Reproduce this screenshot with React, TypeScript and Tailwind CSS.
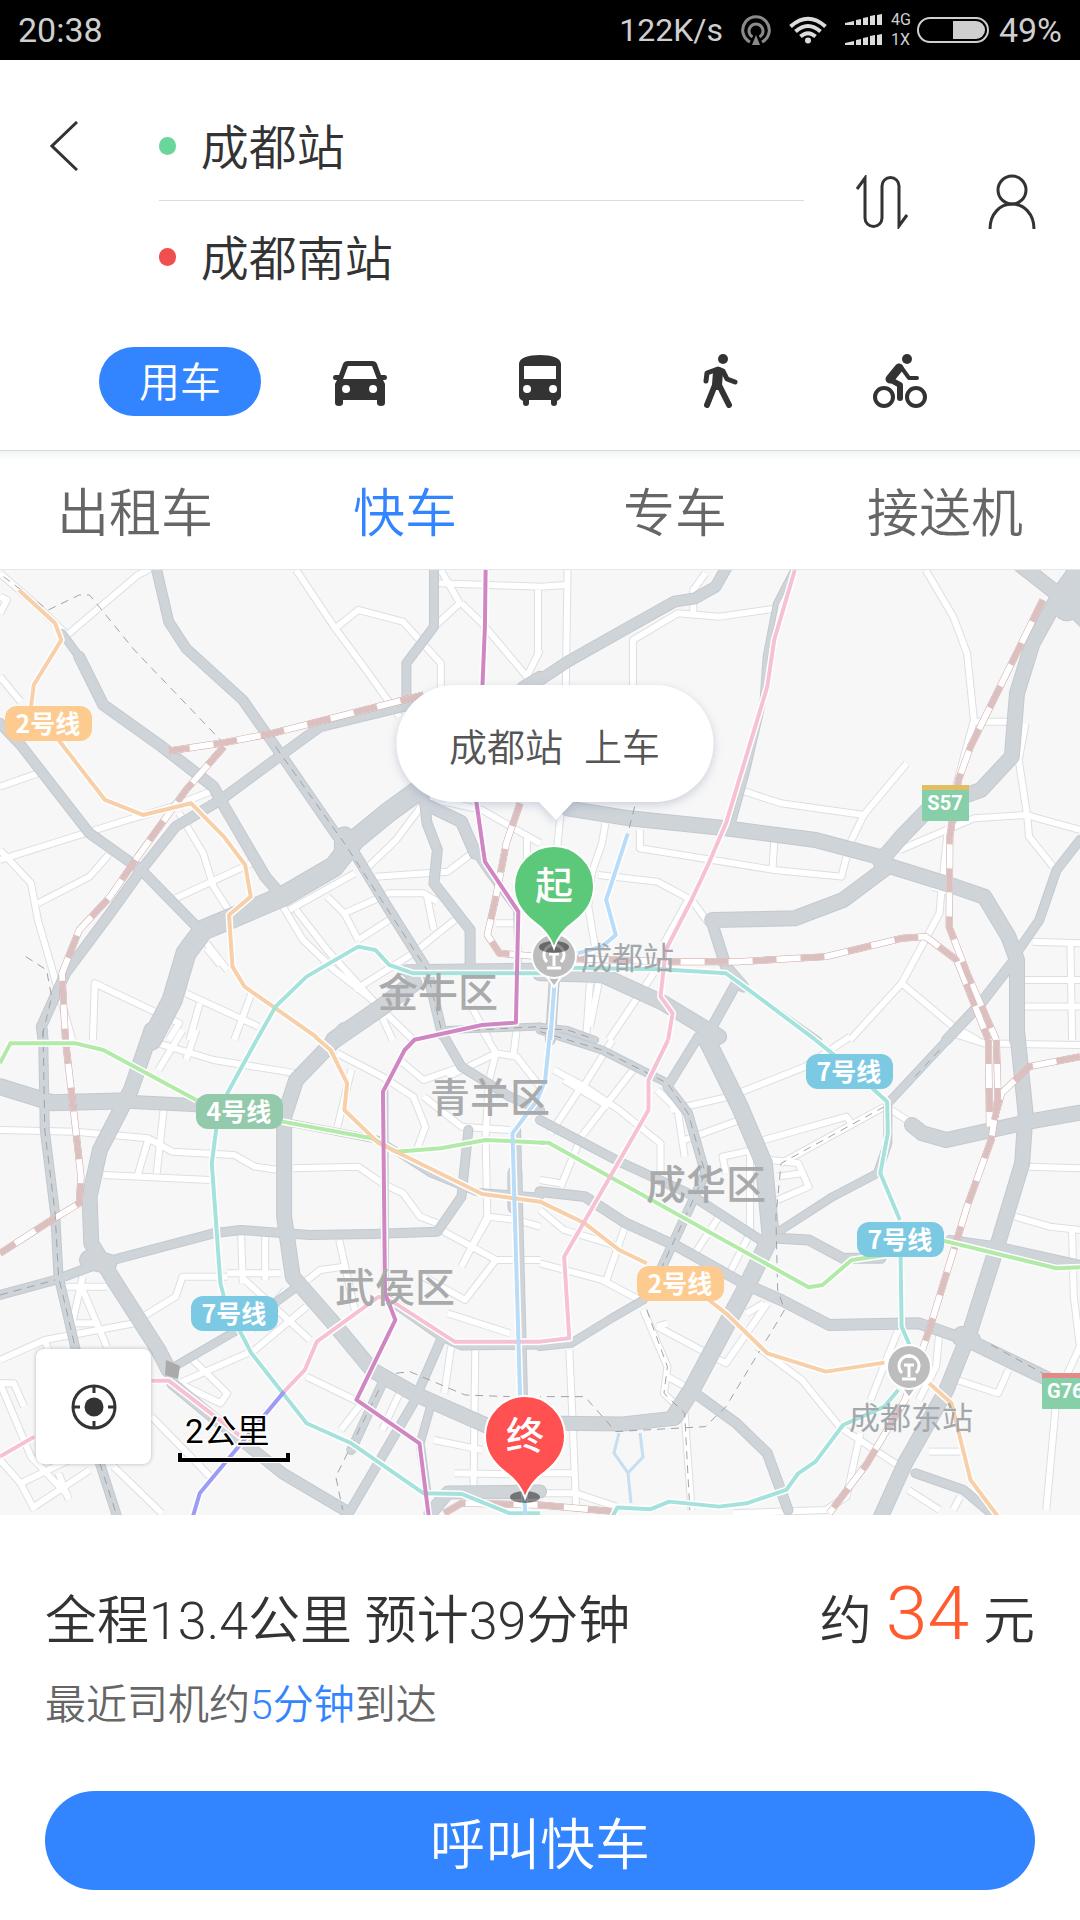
import React from 'react';

type Road = [number, string];
type MetroLine = [string, string];

interface Tile {
  at: string;
  streets: string[];
  roads: Road[];
  rails: string[];
  paths: string[];
  metro: MetroLine[];
}

const ORANGE = '#f7cfa8';
const TEAL = '#a5e2db';
const PURPLE = '#cf86c2';
const PINK = '#f6c1d3';
const GREEN = '#b2eaa8';
const BLUE = '#b9dcf8';
const VIOLET = '#9c9cf4';

// Four tiles cover the city. Points are in each tile's own units.
const tiles: Tile[] = [
  {
    at: 'translate(0 -10) scale(.3444 .3333)',
    streets: [
      '0,350 60,425', '195,225 400,45 440,25', '0,900 370,780 500,740 610,695', '0,680 110,640',
      '0,870 90,970 110,1080 155,1240 210,1440', '110,1030 260,950 315,885', '860,30 970,200 1070,340 1160,470',
      '980,200 1040,150 1170,185 1280,310 1280,430', '1260,200 1335,130 1280,30', '1275,70 1568,80',
      '1340,130 1400,190 1530,350 1568,270', '1562,90 1562,290', '520,760 590,880 620,980 670,1060', '510,1015 730,910',
      '810,1020 880,1140 970,1230 1070,1310 1200,1440', '860,1050 950,1170 1090,1330', '840,1050 1030,940',
      '1090,950 1300,935 1370,880', '1070,920 1150,840 1230,730', '950,1010 1000,1060 1040,1140',
      '1000,1060 1130,1000 1230,1000 1270,1025', '1240,1010 1260,1110', '1040,1140 1130,1080',
      '1030,1290 1200,1180 1320,1080', '270,1440 275,1270 520,1390 490,1440', '540,1300 750,1400',
      '600,1150 660,1230', '580,1330 550,1440', '730,1300 680,1440', '1370,1340 1420,1440', '1440,1090 1500,1090',
      '1290,725 1400,750 1568,850', '1530,830 1530,900', '0,40 100,130 200,230', '0,110 20,120 0,160',
      '600,1165 640,1215', '1100,1350 1140,1440',
    ],
    roads: [
      [10, '455,30 490,185 540,265 705,420 810,575 980,830 1030,880 1130,1050 1240,1230 1285,1425'],
      [8, '180,220 230,290'],
      [11, '230,290 300,435 470,560 620,680 640,720 770,950 820,1010'],
      [10, '0,490 60,555 260,820 410,930 580,1110'],
      [9, '1260,30 1260,200 1180,310 1180,435'],
      [10, '1190,435 930,500 850,560 640,720 510,800 410,930 320,1060 190,1240 120,1400 125,1440'],
      [20, '1230,680 1130,755 1030,840 970,920 820,1010 660,1080 590,1110 540,1180 500,1320 440,1440'],
      [20, '1000,830 1000,880'],
      [10, '1230,700 1240,790 1270,870 1260,970 1365,1110 1365,1225'],
      [12, '1250,740 1340,785 1380,880'],
      [6, '1380,880 1420,940 1500,1050 1505,1230'],
      [12, '1180,1232 1568,1228'],
      [17, '970,1440 1110,1340 1200,1270'],
      [7, '1290,1410 1568,1400'],
      [14, '1568,355 1520,385'],
    ],
    rails: [
      '1230,405 790,520 640,550 490,573',
      '650,560 540,690 400,890 320,1010 230,1110 180,1240 190,1440',
      '1510,730 1470,850 1440,1010 1415,1125 1450,1180 1568,1190',
    ],
    paths: [
      '10,50 140,150 230,105 260,105 390,270 640,540', '75,1190 135,1230 150,1310 120,1440',
      '800,560 1000,850 1240,1230 1285,1425', '1290,1415 1568,1400',
    ],
    metro: [
      [ORANGE, '55,90 160,190 178,240 98,375 90,440'],
      [ORANGE, '170,540 305,720 415,765 555,730 650,830 712,915 728,1010 665,1065 675,1220 710,1280 920,1432'],
      [TEAL, '745,1440 800,1340 890,1250 1040,1160 1090,1170 1130,1215 1200,1240 1580,1240'],
      [PURPLE, '1410,30 1408,200 1400,400'],
      [PURPLE, '1383,725 1408,905 1505,1055 1498,1388 1400,1395 1200,1440'],
    ],
  },
  {
    at: 'translate(540 -10) scale(.3444 .3333)',
    streets: [
      '80,30 75,380', '0,80 75,75', '480,40 445,90 445,165', '690,145 520,170 400,160 270,240 270,380',
      '1120,30 1200,170 1240,280 1260,480 1205,690', '1265,485 1360,485', '580,690 700,730 940,765 1065,610',
      '940,765 900,850', '1410,490 1390,600 1415,770 1420,830 1490,920', '1045,870 1260,775 1410,765 1568,810',
      '290,810 290,865 680,930 875,950 890,890', '680,845 675,930', '190,790 180,850 150,940 140,1040 160,1160',
      '170,945 340,965 440,1020 490,1090', '1185,800 1165,1000 1160,1060 1050,1270 900,1440',
      '1050,1270 1200,1400 1270,1440', '1430,1145 1568,1150', '1400,1260 1568,1260', '1400,1340 1568,1340',
      '1540,1150 1545,1440', '60,760 50,860', '330,1240 200,1440', '145,1270 135,1420', '170,1270 145,1400',
      '430,1020 360,1150', '1140,980 1200,1000',
    ],
    roads: [
      [11, '540,25 510,80 450,115 390,125 260,200 80,305 0,360'],
      [5, '735,30 685,130 655,290 645,440 600,640 560,790'],
      [15, '80,745 260,775 540,805 800,840 1000,895'],
      [15, '1000,890 1050,830 1130,745 1280,690 1370,590 1385,400 1430,250 1510,100'],
      [15, '1390,10 1500,100 1590,190'],
      [28, '1580,30 1525,110 1530,140'],
      [15, '990,910 1190,975 1290,1010 1360,1130 1385,1200 1385,1440'],
      [15, '1010,920 880,1020 740,1075 500,1080'],
      [11, '500,1090 540,1220 590,1280'],
      [5, '590,1280 810,1440'],
      [15, '0,1240 180,1245 360,1330 520,1430'],
      [10, '570,1270 500,1400'],
      [9, '1390,1170 1450,1080 1500,930 1568,840'],
      [10, '1385,1190 1280,1330 1180,1440'],
      [7, '0,1400 80,1410 160,1440'],
      [10, '42,1250 30,1440'],
    ],
    rails: [
      '1460,120 1250,560 1215,660 1190,830 1188,1100 1240,1240 1325,1440',
      '60,1195 380,1205 580,1205 830,1190 1050,1135 1120,1130 1210,1200 1302,1440',
    ],
    paths: ['0,1405 80,1410 150,1435', '275,740 255,820'],
    metro: [
      [PINK, '740,30 680,240 660,380 540,790 490,910 440,1020 365,1170 350,1310 385,1360 372,1440'],
      [TEAL, '0,1222 350,1228 540,1240 620,1300 800,1440'],
      [BLUE, '255,820 192,1020 220,1125 180,1160 110,1180'],
      [BLUE, '42,1270 30,1440'],
    ],
  },
  {
    at: 'translate(0 460) scale(.3444 .3333)',
    streets: [
      '0,300 220,305 430,325 500,365 680,375 740,410 810,420',
      '850,415 1040,410 1110,460 1170,490 1220,560 1270,580', '475,240 455,430', '430,330 400,435',
      '300,435 610,450', '460,40 620,90 860,130', '530,0 460,120', '570,0 540,90', '980,70 1110,140 1200,200 1235,290 1210,360',
      '1160,90 1230,150 1340,110', '1020,120 980,290', '700,610 705,760', '770,615 770,750', '660,730 815,730',
      '415,860 510,800 530,740 660,740', '880,760 930,720 1000,710', '985,630 1030,840', '180,770 310,770',
      '240,740 210,880', '210,880 280,880', '0,990 130,930 390,880', '240,780 310,950', '700,740 900,930',
      '830,780 730,900', '520,1060 740,960 890,830', '560,990 660,1090 640,1120 520,1060',
      '1280,600 1370,650 1420,560', '1370,650 1340,710', '1440,690 1568,690', '1420,560 1500,570 1568,590',
      '1410,330 1415,560 1370,650 1440,690', '1400,0 1440,70 1500,80 1568,170', '1500,0 1490,80', '1440,70 1420,150 1410,320', '1300,140 1440,70',
      '1440,690 1350,810 1230,740', '1300,850 1480,910', '890,1040 1050,1120 990,1200', '0,1060 90,1280 200,1400',
      '200,1290 60,1360', '0,1290 60,1360 100,1440', '100,1430 260,1320', '330,1310 470,1450', '440,1160 610,1340',
      '1380,960 1375,1370', '1310,950 1290,1090', '1260,1230 1400,1260', '1320,1330 1568,1335', '1160,1090 1110,1200',
      '130,930 140,960', '0,1060 40,1060 70,1130', '1230,200 1340,290 1480,300', '170,1330 200,1410',
    ],
    roads: [
      [16, '0,170 150,218 370,212'],
      [13, '370,215 560,225 800,250'],
      [15, '440,0 380,180 290,360 260,500 265,640 330,750 460,960 490,1020'],
      [20, '260,690 310,700'],
      [15, '1000,0 860,150 825,260 825,560 850,740 960,870 1080,1020 1200,1090 1420,1190'],
      [9, '125,0 130,300 160,550 170,740 220,960'],
      [9, '290,1300 340,1460'],
      [9, '0,795 160,750 290,700 620,610 700,600 900,615 1080,612 1270,605 1340,500 1360,300'],
      [9, '1290,20 1340,110 1480,200 1568,240'],
      [8, '490,1020 690,900 850,780'],
      [11, '500,1060 640,1180 820,1330 1000,1440'],
      [7, '1116,180 1118,800'],
      [8, '1130,810 1280,920 1340,948 1568,945'],
      [7, '850,280 1100,330 1250,430 1380,485 1568,500'],
      [9, '1280,930 1200,1120 1010,1455'],
      [9, '1110,1060 1020,1260'],
      [8, '1250,1130 1220,1240 1240,1390'],
      [13, '1568,1385 1300,1388 1250,1450'],
      [14, '1495,430 1495,530'],
      [8, '1500,300 1520,1100'],
    ],
    rails: ['190,30 220,300 235,440 230,520 150,570 0,670', '1290,1450 1340,1420 1568,1425'],
    paths: [
      '1150,1030 1190,1025 1350,1095 1480,1100', '1100,1080 975,1340 995,1440', '125,0 130,300 160,550 170,740 220,960',
      '0,795 160,750', '290,1300 340,1460',
    ],
    metro: [
      [GREEN, '0,100 30,40 220,40 300,60 570,210'],
      [GREEN, '820,275 1080,325 1150,365 1280,355 1410,330 1580,338'],
      [TEAL, '745,30 660,190 630,280 615,400 640,760 650,800'],
      [TEAL, '695,900 730,970 890,1180 1020,1240 1230,1390 1340,1392 1480,1450 1568,1450'],
      [ORANGE, '915,20 960,60 1008,160 1000,240 1100,340 1400,492 1568,515'],
      [PINK, '0,1280 100,1220'],
      [PINK, '440,1052 490,1052 700,1220'],
      [PINK, '825,1085 885,1020 920,935 1100,800 1140,815 1320,935 1568,935'],
      [PURPLE, '1203,30 1175,60 1112,185 1118,790 1148,870 1035,1110 1218,1240 1245,1460'],
      [VIOLET, '825,1085 580,1390 560,1460'],
      [BLUE, '1583,150 1560,210 1488,310 1510,1100 1525,1455'],
    ],
  },
  {
    at: 'translate(540 460) scale(.3444 .3333)',
    streets: [
      '40,120 130,170 230,240 350,340 350,430', '270,120 120,320 60,470', '120,170 30,310', '120,180 210,30',
      '340,180 400,240 420,380', '380,240 550,200 770,110 900,20', '420,330 580,270', '650,330 890,260 910,290',
      '670,390 750,400 780,470 690,510', '540,430 530,380 620,360', '610,360 610,600', '450,670 520,560',
      '550,730 610,610', '0,700 180,750 290,810', '250,580 190,760', '0,540 70,600 230,650', '690,440 760,430',
      '340,890 540,1000 660,820', '300,840 370,1010 360,1090 420,1150 440,1440', '650,820 600,850', '340,890 370,880',
      '630,950 760,1050 870,1190 1060,1320', '85,960 95,1180 105,1440', '0,1330 105,1330', '0,1390 105,1390 220,1430',
      '1420,410 1568,415', '1380,560 1480,590 1568,600', '1545,600 1550,800 1568,950 1500,1100 1470,1440',
      '1200,10 1290,40 1568,45', '960,1110 1040,900', '930,1210 890,1400 830,1440 560,1450', '1130,1265 1220,1265',
      '1210,1050 1330,1090 1360,1020', '1160,900 1150,1010 1100,1110', '1070,1380 1160,1440', '1020,240 1080,280',
      '370,1040 440,1080', '0,450 60,460', '1220,1400 1200,1440', '200,230 70,150', '1000,230 700,400',
    ],
    roads: [
      [17, '480,20 580,230 650,400 670,620 600,770 440,1080 390,1160'],
      [14, '390,1165 240,1182 60,1180'],
      [9, '460,20 370,170 430,250 480,430 440,520 350,720'],
      [8, '0,0 180,60 370,160'],
      [9, '0,270 240,400 430,490 640,630'],
      [10, '0,485 130,500 250,580 400,650 590,760'],
      [11, '590,760 700,810 840,885 1100,880 1240,930'],
      [8, '300,810 200,870 90,940 0,950'],
      [15, '1385,0 1410,250 1400,400 1330,640 1250,900 1180,1080 1060,1300 990,1460'],
      [15, '1568,248 1420,275 1180,330 1110,310 1080,285'],
      [8, '1200,10 1010,220 1010,340 980,430 850,500 700,600'],
      [10, '690,625 780,630 880,685 990,685'],
      [9, '1190,630 1330,650 1568,705'],
      [14, '1240,930 1470,1045'],
      [10, '450,1090 570,1180 660,1270 720,1440'],
      [9, '1090,1330 1230,1380 1310,1450'],
      [20, '1225,920 1250,930'],
    ],
    rails: [
      '1325,30 1330,200 1310,330 1240,530 1130,900 1060,1110 950,1300 840,1450',
      '1568,80 1420,110 1340,190 1318,270', '1302,30 1305,290', '0,1425 220,1445',
    ],
    paths: [
      '1000,230 700,400 685,560 690,780 710,840 540,1130 480,1190 220,1205 130,1100 0,1100',
      '310,840 370,1010 360,1090 420,1150 435,1440', '0,5 180,60 370,160 430,250 480,430 440,520 350,720',
      '1310,945 1460,1030', '1160,60 1080,150',
    ],
    metro: [
      [GREEN, '0,338 25,338 780,772 820,765 905,690 1040,670'],
      [GREEN, '1170,632 1500,715 1568,712'],
      [TEAL, '800,30 860,80'],
      [TEAL, '960,170 1008,215 1010,310 988,430 1045,570'],
      [TEAL, '1047,680 1050,890 1075,950'],
      [TEAL, '1040,1080 1000,1130 880,1185 800,1295 750,1330 715,1380 600,1420 520,1430 375,1415 320,1438 225,1433 210,1460'],
      [ORANGE, '0,515 130,580 230,660 310,700'],
      [ORANGE, '490,810 540,850 660,970 830,1025 1000,998'],
      [ORANGE, '1130,1060 1195,1120 1250,1350 1330,1460'],
      [PINK, '372,30 315,150 315,240 70,680 85,925 0,935'],
      [BLUE, '30,0 15,150'],
    ],
  },
];

const districts = [
  { name: '金牛区', x: 378, y: 437 },
  { name: '青羊区', x: 430, y: 542 },
  { name: '成华区', x: 646, y: 629 },
  { name: '武侯区', x: 335, y: 732 },
];

const lineBadges = [
  { name: '2号线', x: 5, y: 136, color: '#fdcb90' },
  { name: '4号线', x: 196, y: 524, color: '#93caab' },
  { name: '7号线', x: 191, y: 726, color: '#7cc9e3' },
  { name: '7号线', x: 806, y: 484, color: '#7cc9e3' },
  { name: '7号线', x: 857, y: 652, color: '#7cc9e3' },
  { name: '2号线', x: 637, y: 696, color: '#fdcb90' },
];

const tabs = ['出租车', '快车', '专车', '接送机'];

function Line({ points, color, width, dash }: { points: string; color: string; width: number; dash?: string }) {
  return (
    <polyline
      points={points}
      stroke={color}
      strokeWidth={width}
      strokeDasharray={dash}
      strokeLinejoin="round"
      vectorEffect="non-scaling-stroke"
    />
  );
}

function Layer({ draw }: { draw: (tile: Tile) => React.ReactNode }) {
  return (
    <g fill="none">
      {tiles.map((tile) => (
        <g key={tile.at} transform={tile.at}>
          {draw(tile)}
        </g>
      ))}
    </g>
  );
}

function Station({ x, y }: { x: number; y: number }) {
  return (
    <g transform={`translate(${x} ${y})`}>
      <path d="M-7 21 0 31 7 21Z" fill="#bdbdbd" stroke="#fff" strokeWidth="2" />
      <circle r="22" fill="#bdbdbd" stroke="#fff" strokeWidth="2" />
      <path d="M-7 6a10 10 0 1 1 14 0M-5-2h10M0-2v12M-7 12h14M0-13v4" fill="none" stroke="#fff" strokeWidth="3" />
    </g>
  );
}

function Pin({ x, y, color, label }: { x: number; y: number; color: string; label: string }) {
  return (
    <g transform={`translate(${x} ${y})`}>
      <ellipse cy="61" rx="15" ry="6" fill="#000" opacity=".45" />
      <path
        d="M0-40C-22-40-40-22-40 0c0 16 8 27 20 36C-10 43-4 50 0 62 4 50 10 43 20 36 32 27 40 16 40 0 40-22 22-40 0-40Z"
        fill={color}
        stroke="#fff"
        strokeWidth="2"
      />
      <text y="13" textAnchor="middle" fill="#fff" className="text-[38px] font-medium">
        {label}
      </text>
    </g>
  );
}

function CityMap() {
  return (
    <svg viewBox="0 0 1080 945" className="block h-auto w-full bg-[#f7f7f7]" role="img" aria-label="成都站到成都南站">
      <Layer draw={(t) => t.streets.map((p) => <Line key={p} points={p} color="#dcdfe2" width={8} />)} />
      <Layer draw={(t) => t.streets.map((p) => <Line key={p} points={p} color="#ffffff" width={6} />)} />
      <g strokeLinecap="round">
        <Layer draw={(t) => t.roads.map(([w, p]) => <Line key={p} points={p} color="#c3c9d0" width={w + 1} />)} />
        <Layer draw={(t) => t.roads.map(([w, p]) => <Line key={p} points={p} color="#cfd4d9" width={w - 1} />)} />
      </g>
      <Layer draw={(t) => t.rails.map((p) => <Line key={p} points={p} color="#cfa5a5" width={7} />)} />
      <Layer draw={(t) => t.rails.map((p) => <Line key={p} points={p} color="#ffffff" width={6} />)} />
      <Layer draw={(t) => t.rails.map((p) => <Line key={p} points={p} color="#dcc0c0" width={6} dash="24 24" />)} />
      <Layer draw={(t) => t.paths.map((p) => <Line key={p} points={p} color="#9fa3a8" width={1} dash="8 6" />)} />
      <path d="M619 863l-5 20 14 20 3 30M628 903l15-16-3-24" fill="none" stroke="#c5def0" strokeWidth="3" />

      <path d="M166 790l14 6-2 13-13-4Z" fill="#aaa" />
      <Layer draw={(t) => t.metro.map(([, p]) => <Line key={p} points={p} color="#ffffff" width={7} />)} />
      <Layer draw={(t) => t.metro.map(([c, p]) => <Line key={p} points={p} color={c} width={4} />)} />

      {districts.map((d) => (
        <text key={d.name} x={d.x} y={d.y} fill="#a9aaab" className="text-[40px] font-medium">
          {d.name}
        </text>
      ))}

      {lineBadges.map((b) => (
        <g key={`${b.x}-${b.y}`} transform={`translate(${b.x} ${b.y})`}>
          <rect width="87" height="35" rx="12" fill={b.color} />
          <text x="43" y="27" textAnchor="middle" fill="#fff" className="text-[25px] font-bold">
            {b.name}
          </text>
        </g>
      ))}

      <rect x="922" y="215" width="47" height="36" rx="1" fill="#87cfa8" />
      <rect x="922" y="215" width="47" height="5" fill="#e0bf62" />
      <text x="945" y="240" textAnchor="middle" fill="#fff" className="font-[Roboto] text-[20px] font-bold">
        S57
      </text>
      <rect x="1042" y="803" width="50" height="36" rx="1" fill="#87cfa8" />
      <rect x="1042" y="803" width="50" height="5" fill="#e38a88" />
      <text x="1047" y="828" fill="#fff" className="font-[Roboto] text-[20px] font-bold">
        G76
      </text>

      <Station x={554} y={386} />
      <Station x={909} y={797} />
      <text x="581" y="399" fill="#a3a8ad" className="text-[31px]">
        成都站
      </text>
      <text x="849" y="859" fill="#a3a8ad" className="text-[31px]">
        成都东站
      </text>

      <Pin x={554} y={316} color="#5bc87a" label="起" />
      <Pin x={525} y={866} color="#ff5052" label="终" />

      <g className="drop-shadow-[0_3px_5px_rgba(70,90,140,0.25)]">
        <path d="M455 115H655A58 58 0 0 1 655 232H573L556 250 539 232H455A58 58 0 0 1 455 115Z" fill="#fff" />
      </g>
      <text x="449" y="191" fill="#555" className="text-[38px] font-[350]">
        成都站
      </text>
      <text x="584" y="191" fill="#555" className="text-[38px] font-[350]">
        上车
      </text>

      <text x="185" y="873" fill="#000" stroke="#fff" strokeWidth="3" paintOrder="stroke" className="font-[Roboto,'Noto_Sans_CJK_SC',sans-serif] text-[33px]">
        2公里
      </text>
      <path d="M180 883v7h108v-7" fill="none" stroke="#fff" strokeWidth="6" />
      <path d="M180 883v7h108v-7" fill="none" stroke="#000" strokeWidth="4" />
    </svg>
  );
}

function StatusBar() {
  return (
    <div className="flex h-[60px] items-center bg-black px-[18px] font-[Roboto] text-[#cfcfcf]">
      <span className="mr-auto text-[34px]">20:38</span>
      <span className="text-[32px]">122K/s</span>
      <svg viewBox="0 0 30 30" className="ml-[18px] h-[30px] w-[30px]" fill="none" stroke="#8a8a8a" strokeWidth="3">
        <path d="M9 27A13.3 13.3 0 1 1 21 27" />
        <path d="M11.500 22A7 7 0 1 1 18.500 22" />
        <path d="M15 20l4 10h-8Z" fill="#8a8a8a" stroke="none" />
      </svg>
      <svg viewBox="0 0 38 28" className="ml-[18px] h-[28px] w-[38px]" fill="none" stroke="#dcdcdc" strokeWidth="4">
        <path d="M1.500 10.500Q19-5 36.500 10.500" />
        <path d="M6.500 15.500Q19 4.500 31.500 15.500" />
        <path d="M11.500 20.500Q19 14 26.500 20.500" />
        <circle cx="19" cy="24.500" r="3" fill="#dcdcdc" stroke="none" />
      </svg>
      <svg viewBox="0 0 38 32" className="ml-[18px] h-[32px] w-[38px]" fill="#dcdcdc">
        <path id="bars" d="M0 11V9l9-2v4ZM11 11V6l5-1v6ZM18 11V4l5-1v8ZM25 11V2l5-1v10ZM32 11V1l5-1v11Z" />
        <use href="#bars" y="20" />
      </svg>
      <span className="ml-[8px] flex flex-col text-[16px] leading-[20px]">
        <span>4G</span>
        <span>1X</span>
      </span>
      <svg viewBox="0 0 72 26" className="ml-[6px] h-[26px] w-[72px]">
        <rect x="1" y="1" width="70" height="24" rx="12" fill="none" stroke="#cfcfcf" strokeWidth="2" />
        <path d="M36 4h23a9 9 0 0 1 0 18H36Z" fill="#cfcfcf" />
      </svg>
      <span className="ml-[10px] text-[34px]">49%</span>
    </div>
  );
}

function Header() {
  return (
    <header className="bg-white">
      <div className="flex items-center pt-[31px]">
        <button type="button" aria-label="返回" className="flex h-[110px] w-[159px] items-center self-start pl-[50px]">
          <svg viewBox="0 0 28 50" className="h-[50px] w-[28px]" fill="none" stroke="#333" strokeWidth="3">
            <path d="M27 1 2 25l25 24" />
          </svg>
        </button>
        <div className="flex-1 divide-y divide-[#dcdcdc]">
          <label className="flex h-[110px] items-center">
            <span className="h-[18px] w-[18px] rounded-full bg-[#6bd69b]" />
            <input
              aria-label="起点"
              defaultValue="成都站"
              className="ml-[25px] w-full min-w-0 bg-transparent pb-1 text-[48px] font-[350] text-[#333] outline-none"
            />
          </label>
          <label className="flex h-[111px] items-center">
            <span className="h-[18px] w-[18px] rounded-full bg-[#ef4f4f]" />
            <input
              aria-label="终点"
              defaultValue="成都南站"
              className="ml-[25px] w-full min-w-0 bg-transparent pb-1 text-[48px] font-[350] text-[#333] outline-none"
            />
          </label>
        </div>
        <div className="flex items-center gap-[80px] pr-[44px] pl-[52px]">
          <button type="button" aria-label="交换起终点">
            <svg viewBox="0 0 52 54" className="h-[54px] w-[52px]" fill="none" stroke="#333" strokeWidth="3">
              <path d="M1 14 9 3v40a8.500 8.500 0 0 0 17 0V11a8.500 8.500 0 0 1 17 0v40l8-11" />
            </svg>
          </button>
          <button type="button" aria-label="我的">
            <svg viewBox="0 0 48 56" className="h-[56px] w-[48px]" fill="none" stroke="#333" strokeWidth="3">
              <circle cx="24" cy="16" r="14" />
              <path d="M2 55C2 40 12 30 24 30s22 10 22 25" />
            </svg>
          </button>
        </div>
      </div>

      <nav className="grid h-[138px] grid-cols-5 place-items-center px-[90px] text-[#333]">
        <button type="button" className="h-[69px] w-[162px] rounded-full bg-[#3385ff] pb-1 text-[41px] leading-[64px] font-[350] text-white">
          用车
        </button>
        <button type="button" aria-label="驾车">
          <svg viewBox="0 0 54 54" className="h-[54px] w-[54px]" fill="currentColor">
            <path
              fillRule="evenodd"
              d="M15 7h24q4 0 5 3l4 11h4q2 0 2 2.500T51 26h-1l2 4v19q0 3-4 3t-4-3v-3H10v3q0 3-4 3t-4-3V30l2-4H3q-3 0-3-2.500T2 21h4l4-11q1-3 5-3Zm0 5-5 13h34l-5-13Zm-2 19a4 4 0 1 0 .1 8 4 4 0 0 0-.1-8Zm27 0a4 4 0 1 0 .1 8 4 4 0 0 0-.1-8Z"
            />
          </svg>
        </button>
        <button type="button" aria-label="公交">
          <svg viewBox="0 0 54 54" className="h-[54px] w-[54px]" fill="currentColor">
            <path
              fillRule="evenodd"
              d="M27 1C15 1 6 4 6 10v32q0 3 4 5v2q0 3 3 3t3-3v-3h22v3q0 3 3 3t3-3v-2q4-2 4-5V10C48 4 39 1 27 1ZM11 12h32v13H11Zm3 19a4 4 0 1 0 .1 8 4 4 0 0 0-.1-8Zm26 0a4 4 0 1 0 .1 8 4 4 0 0 0-.1-8Z"
            />
          </svg>
        </button>
        <button type="button" aria-label="步行">
          <svg viewBox="0 0 54 54" className="h-[54px] w-[54px]" fill="none" stroke="currentColor" strokeLinecap="round" strokeLinejoin="round">
            <circle cx="30" cy="5" r="5" fill="currentColor" stroke="none" />
            <path d="M13 27l1-8 11-4 5 2 4 8 8 3" strokeWidth="5" />
            <path d="M22 31l-8 20M26 31l10 20" strokeWidth="6" />
            <path d="M25 18l-1 13" strokeWidth="10" />
          </svg>
        </button>
        <button type="button" aria-label="骑行">
          <svg viewBox="0 0 54 54" className="h-[54px] w-[54px]" fill="none" stroke="currentColor" strokeLinecap="round" strokeLinejoin="round">
            <circle cx="34" cy="5" r="5" fill="currentColor" stroke="none" />
            <circle cx="11" cy="43" r="9" strokeWidth="4" />
            <circle cx="43" cy="43" r="9" strokeWidth="4" />
            <path d="M28 13l8 11h8" strokeWidth="4" />
            <path d="M26 14l-9 11" strokeWidth="9" />
            <path d="M18 26l9 5v13" strokeWidth="6" />
          </svg>
        </button>
      </nav>
    </header>
  );
}

function ServiceTabs() {
  return (
    <nav className="grid grid-cols-4 border-y border-t-[#d5d8d9] border-b-[#e6e6e6] bg-linear-to-b from-[#f2f4f4] to-white to-[10px]">
      {tabs.map((tab) => (
        <button
          key={tab}
          type="button"
          className={`h-[118px] text-[52px] font-[350] ${tab === '快车' ? 'text-[#3385ff]' : 'text-[#666]'}`}
        >
          {tab}
        </button>
      ))}
    </nav>
  );
}

export default function App() {
  return (
    <div className="flex min-h-screen flex-col bg-white font-['Noto_Sans_CJK_SC',sans-serif] text-[#333]">
      <StatusBar />
      <Header />
      <ServiceTabs />

      <main className="relative overflow-hidden">
        <CityMap />
        <button
          type="button"
          aria-label="定位"
          className="absolute bottom-[51px] left-[36px] flex h-[115px] w-[115px] items-center justify-center rounded-lg bg-white shadow-[0_0_4px_rgba(0,0,0,0.25)]"
        >
          <svg viewBox="0 0 46 46" className="h-[46px] w-[46px]" fill="none" stroke="#333" strokeWidth="3">
            <circle cx="23" cy="23" r="21" />
            <circle cx="23" cy="23" r="9.500" fill="#333" stroke="none" />
            <path d="M23 2v7M23 37v7M2 23h7M37 23h7" />
          </svg>
        </button>
      </main>

      <section className="px-[45px] pt-14 pb-[30px]">
        <div className="flex h-[84px] items-baseline justify-between font-[Roboto,'Noto_Sans_CJK_SC',sans-serif] text-[52px] leading-[84px] font-[350]">
          <p>全程13.4公里 预计39分钟</p>
          <p className="flex items-baseline gap-[14px]">
            约<span className="text-[75px] text-[#ff5b2e]">34</span>元
          </p>
        </div>
        <p className="mt-5 font-[Roboto,'Noto_Sans_CJK_SC',sans-serif] text-[41px] leading-[60px] font-[350] text-[#666]">
          最近司机约<span className="text-[#3385ff]">5分钟</span>到达
        </p>
        <button type="button" className="mt-14 h-[99px] w-full rounded-full bg-[#3385ff] text-[55px] font-[350] text-white">
          呼叫快车
        </button>
      </section>
    </div>
  );
}
